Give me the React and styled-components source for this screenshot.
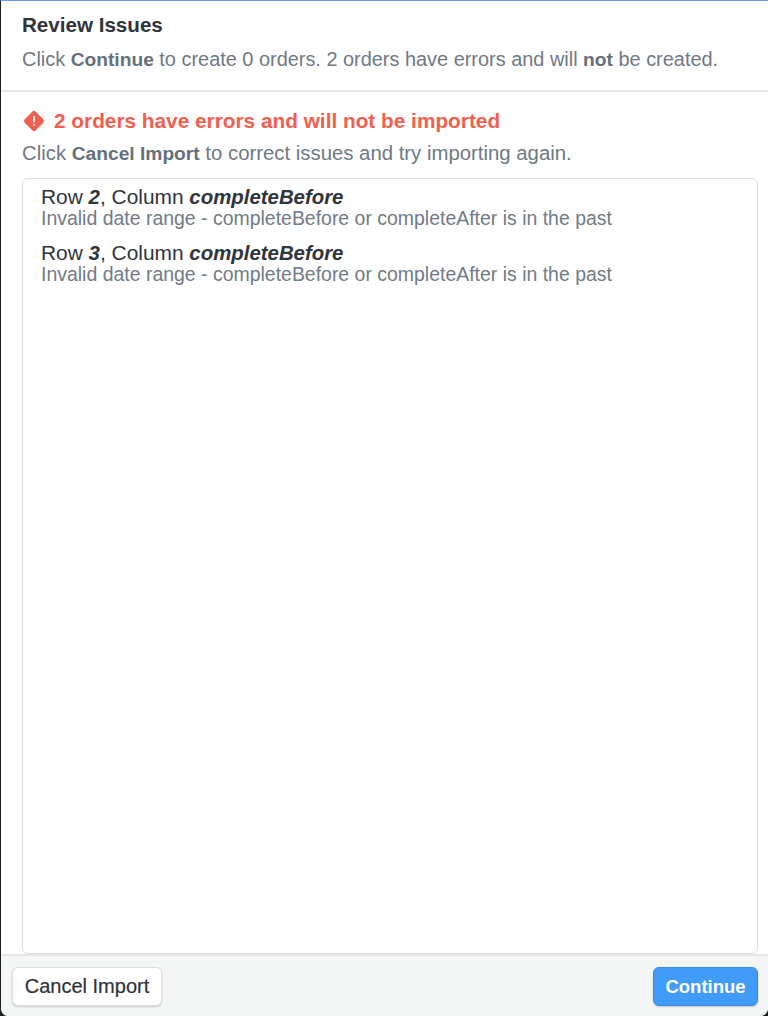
import React from "react";
import styled, { createGlobalStyle } from "styled-components";

const Global = createGlobalStyle`
  html, body { margin: 0; padding: 0; background: #1c1e22; }
  body { font-family: "Liberation Sans", Arial, sans-serif; }
  * { box-sizing: border-box; }
`;

const Modal = styled.div`
  width: 768px;
  height: 1016px;
  display: flex;
  flex-direction: column;
  background: #fff;
  border-top: 1px solid #6f94ee;
  border-left: 1px solid #1c1e22;
  border-radius: 0 0 8px 8px;
  overflow: hidden;
`;

const Header = styled.header`
  height: 91px;
  flex: none;
  padding: 13px 21px 0;
  border-bottom: 2px solid #e6e7e8;
`;

const Title = styled.h1`
  margin: 0;
  font-size: 20.6px;
  line-height: 21px;
  font-weight: 700;
  color: #2f333a;
`;

const Hint = styled.p`
  margin: ${(p) => p.$top}px 0 0;
  font-size: ${(p) => p.$size}px;
  line-height: 20px;
  color: #6f7985;
  white-space: nowrap;
  b { font-size: 19.2px; font-weight: 700; color: #666f7b; }
`;

const Body = styled.main`
  flex: 1;
  min-height: 0;
  display: flex;
  flex-direction: column;
  padding: 17px 10px 0 21px;
`;

const ErrorHeading = styled.h2`
  margin: 0;
  display: flex;
  align-items: center;
  gap: 8px;
  font-size: 20.8px;
  line-height: 24px;
  font-weight: 700;
  color: #f1604f;
`;

const ErrorList = styled.section`
  flex: 1;
  min-height: 0;
  margin-top: 14px;
  padding: 8px 18px;
  border: 1px solid #dcdedf;
  border-radius: 6px;
`;

const Issue = styled.div`
  margin-bottom: 14px;
`;

const IssueTitle = styled.div`
  font-size: 20.9px;
  line-height: 20px;
  color: #30343b;
  strong { font-size: 20.4px; font-weight: 700; font-style: italic; }
`;

const IssueDetail = styled.div`
  font-size: 19.47px;
  line-height: 22px;
  color: #717b87;
`;

const Footer = styled.footer`
  height: 62px;
  flex: none;
  display: flex;
  justify-content: space-between;
  align-items: flex-start;
  padding: 11px 10px 0 11px;
  background: #f4f6f6;
  border-top: 2px solid #e4e5e6;
`;

const Button = styled.button`
  height: 39px;
  width: ${(p) => p.$width}px;
  padding: 0;
  border-radius: 6px;
  font-family: inherit;
  font-size: ${(p) => (p.$primary ? 18.5 : 20)}px;
  font-weight: ${(p) => (p.$primary ? 700 : 400)};
  color: ${(p) => (p.$primary ? "#fff" : "#2f333a")};
  background: ${(p) => (p.$primary ? "#419bf9" : "#fff")};
  border: 1px solid ${(p) => (p.$primary ? "#3a8be0" : "#dcdedf")};
  box-shadow: 0 1px 2px rgba(0, 0, 0, 0.18);
  -webkit-text-stroke: ${(p) => (p.$primary ? "0" : "0.2px")};
`;

const Warn = () => (
  <svg width="24" height="24" viewBox="0 0 24 24" aria-hidden="true">
    <rect x="4.2" y="4.2" width="15.6" height="15.6" rx="2.5" fill="#f1604f" transform="rotate(45 12 12)" />
    <rect x="11.1" y="6.8" width="1.8" height="6.8" rx="0.9" fill="#fff" />
    <circle cx="12" cy="16" r="1.1" fill="#fff" />
  </svg>
);

const issues = [2, 3];

export default function App() {
  return (
    <>
      <Global />
      <Modal>
        <Header>
          <Title>Review Issues</Title>
          <Hint $top={14} $size={19.92}>
            Click <b>Continue</b> to create 0 orders. 2 orders have errors and will <b>not</b> be created.
          </Hint>
        </Header>
        <Body>
          <ErrorHeading>
            <Warn />
            <span>2 orders have errors and will not be imported</span>
          </ErrorHeading>
          <Hint $top={10} $size={20.35}>
            Click <b>Cancel Import</b> to correct issues and try importing again.
          </Hint>
          <ErrorList>
            {issues.map((row) => (
              <Issue key={row}>
                <IssueTitle>
                  Row <strong>{row}</strong>, Column <strong>completeBefore</strong>
                </IssueTitle>
                <IssueDetail>Invalid date range - completeBefore or completeAfter is in the past</IssueDetail>
              </Issue>
            ))}
          </ErrorList>
        </Body>
        <Footer>
          <Button $width={150}>Cancel Import</Button>
          <Button $primary $width={105}>Continue</Button>
        </Footer>
      </Modal>
    </>
  );
}
